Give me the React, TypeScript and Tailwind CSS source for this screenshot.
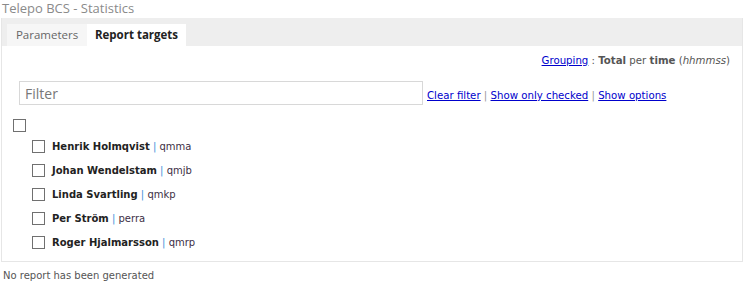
import React from "react";

const people = [
  { name: "Henrik Holmqvist", id: "qmma" },
  { name: "Johan Wendelstam", id: "qmjb" },
  { name: "Linda Svartling", id: "qmkp" },
  { name: "Per Ström", id: "perra" },
  { name: "Roger Hjalmarsson", id: "qmrp" },
];

function Box() {
  return <span className="block w-[13px] h-[13px] border border-[#707070] bg-white shrink-0" />;
}

export default function App() {
  return (
    <div className="w-[743px] h-[289px] bg-white overflow-hidden" style={{ fontFamily: '"DejaVu Sans", Verdana, sans-serif' }}>
      <div className="h-[18px] pl-[2px] text-[13px] leading-[16px] text-[#8a8a8a]" style={{ fontFamily: '"Open Sans", "Noto Sans", sans-serif' }}>
        Telepo BCS - Statistics
      </div>
      <div className="ml-[1px] border-l border-r border-b border-[#e6e6e6] h-[244px]">
        <div className="h-[28px] bg-[#eeeeee] flex items-end pl-[5px]" style={{ fontFamily: '"Open Sans", "Noto Sans", sans-serif' }}>
          <div className="h-[22px] w-[80px] text-center bg-[#f6f6f6] text-[11.5px] leading-[22px] text-[#666]">Parameters</div>
          <div className="h-[22px] w-[99px] text-center bg-white text-[11.5px] leading-[22px] font-bold text-[#222]">Report targets</div>
        </div>
        <div className="flex justify-end pr-[12px] pt-[8px] text-[10.2px] leading-[13px] text-[#555]">
          <a className="text-[#0000cc] underline">Grouping</a>
          <span>&nbsp;: <b>Total</b> per <b>time</b> (<i>hhmmss</i>)</span>
        </div>
        <div className="flex items-end pl-[17px] mt-[14px]">
          <div className="w-[404px] h-[24px] border border-[#d8d8d8] flex items-center pl-[5px] text-[14px] text-[#777]" style={{ fontFamily: '"Open Sans", "Noto Sans", sans-serif' }}>Filter</div>
          <div className="ml-[4px] mb-[3px] text-[10.2px] leading-[13px] text-[#999]">
            <a className="text-[#0000cc] underline">Clear filter</a> | <a className="text-[#0000cc] underline">Show only checked</a> | <a className="text-[#0000cc] underline">Show options</a>
          </div>
        </div>
        <div className="pl-[11px] mt-[14px] flex">
          <Box />
        </div>
        <div className="pl-[30px] mt-[2px] flex flex-col">
          {people.map((p) => (
            <div key={p.id} className="h-[24px] flex items-center gap-[7px] text-[10px]">
              <Box />
              <span>
                <b className="text-[#222]">{p.name}</b> <span className="text-[#3a8fd9]">|</span> <span className="text-[#3d2f45]">{p.id}</span>
              </span>
            </div>
          ))}
        </div>
      </div>
      <div className="pl-[3px] pt-[6px] text-[10px] text-[#555]">No report has been generated</div>
    </div>
  );
}
